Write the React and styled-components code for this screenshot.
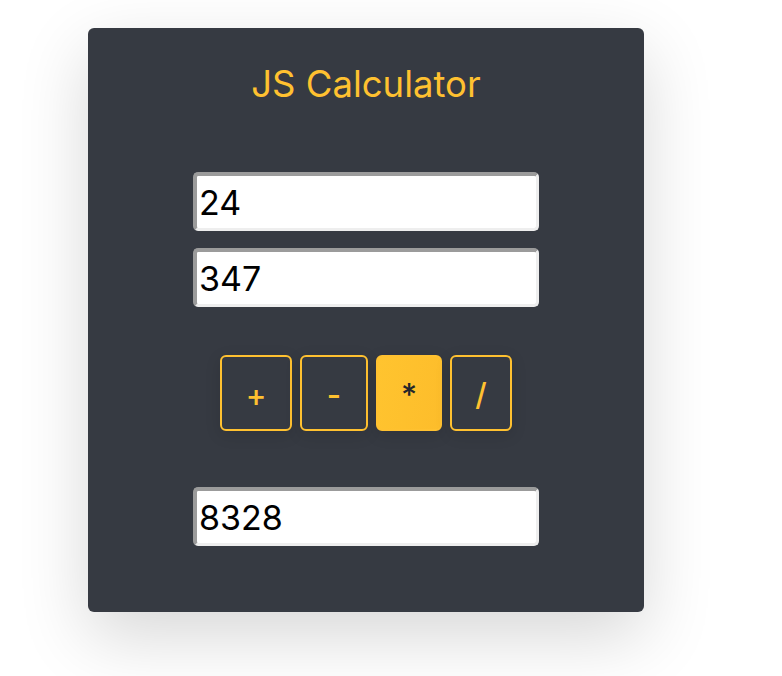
import React, { useState } from "react";
import styled, { createGlobalStyle } from "styled-components";

const Global = createGlobalStyle`
  html, body { margin: 0; padding: 0; background: #ffffff; }
  body { font-family: Inter, "Noto Sans", "Liberation Sans", sans-serif; }
`;

const Page = styled.div`
  box-sizing: border-box;
  min-height: 676px;
  padding: 28px 0 0 88px;
`;

const Card = styled.div`
  width: 556px;
  height: 584px;
  box-sizing: border-box;
  background: #363a42;
  border-radius: 6px;
  box-shadow: 0 24px 70px rgba(0, 0, 0, 0.16);
  display: flex;
  flex-direction: column;
  align-items: center;
  padding-top: 36px;
`;

const Title = styled.h1`
  margin: 0;
  font-size: 36.5px;
  line-height: 41px;
  font-weight: 400;
  color: #ffc130;
`;

const Inputs = styled.div`
  margin-top: 67px;
  display: flex;
  flex-direction: column;
  gap: 17px;
`;

const Field = styled.input`
  box-sizing: border-box;
  width: 346px;
  height: 59px;
  margin: 0;
  padding: 0 0 0 2px;
  border-style: solid;
  border-width: 4px 3px 3px 4px;
  border-color: #9b9b9b #eeeeee #eeeeee #9b9b9b;
  border-radius: 5px;
  background: #ffffff;
  font-family: Inter, "Noto Sans", "Liberation Sans", sans-serif;
  font-size: 34px;
  color: #000;
  outline: none;
`;

const Ops = styled.div`
  margin-top: 48px;
  display: flex;
  gap: 8px;
`;

const OpButton = styled.button`
  box-sizing: border-box;
  height: 76px;
  width: ${(p) => p.$w}px;
  border: 2px solid #ffc130;
  border-radius: 6px;
  background: ${(p) =>
    p.$active ? "linear-gradient(100deg, #ffc42f, #fdbd2b)" : "#363a42"};
  color: ${(p) => (p.$active ? "#23262b" : "#ffc130")};
  font-family: Inter, "Noto Sans", "Liberation Sans", sans-serif;
  font-size: 31px;
  font-weight: 500;
  box-shadow: 0 4px 16px rgba(0, 0, 0, 0.12);
  padding: 2px 0 0;
  cursor: pointer;
`;

const ResultWrap = styled.div`
  margin-top: 56px;
`;

const ops = [
  { s: "+", w: 72 },
  { s: "-", w: 68 },
  { s: "*", w: 66 },
  { s: "/", w: 62 },
];

export default function App() {
  const [a, setA] = useState("24");
  const [b, setB] = useState("347");
  const [op, setOp] = useState("*");
  const x = parseFloat(a);
  const y = parseFloat(b);
  let r = "";
  if (!isNaN(x) && !isNaN(y)) {
    r = op === "+" ? x + y : op === "-" ? x - y : op === "*" ? x * y : x / y;
  }
  return (
    <Page>
      <Global />
      <Card>
        <Title>JS Calculator</Title>
        <Inputs>
          <Field value={a} onChange={(e) => setA(e.target.value)} />
          <Field value={b} onChange={(e) => setB(e.target.value)} />
        </Inputs>
        <Ops>
          {ops.map((o) => (
            <OpButton
              key={o.s}
              $w={o.w}
              $active={op === o.s}
              onClick={() => setOp(o.s)}
            >
              {o.s}
            </OpButton>
          ))}
        </Ops>
        <ResultWrap>
          <Field value={String(r)} readOnly />
        </ResultWrap>
      </Card>
    </Page>
  );
}
